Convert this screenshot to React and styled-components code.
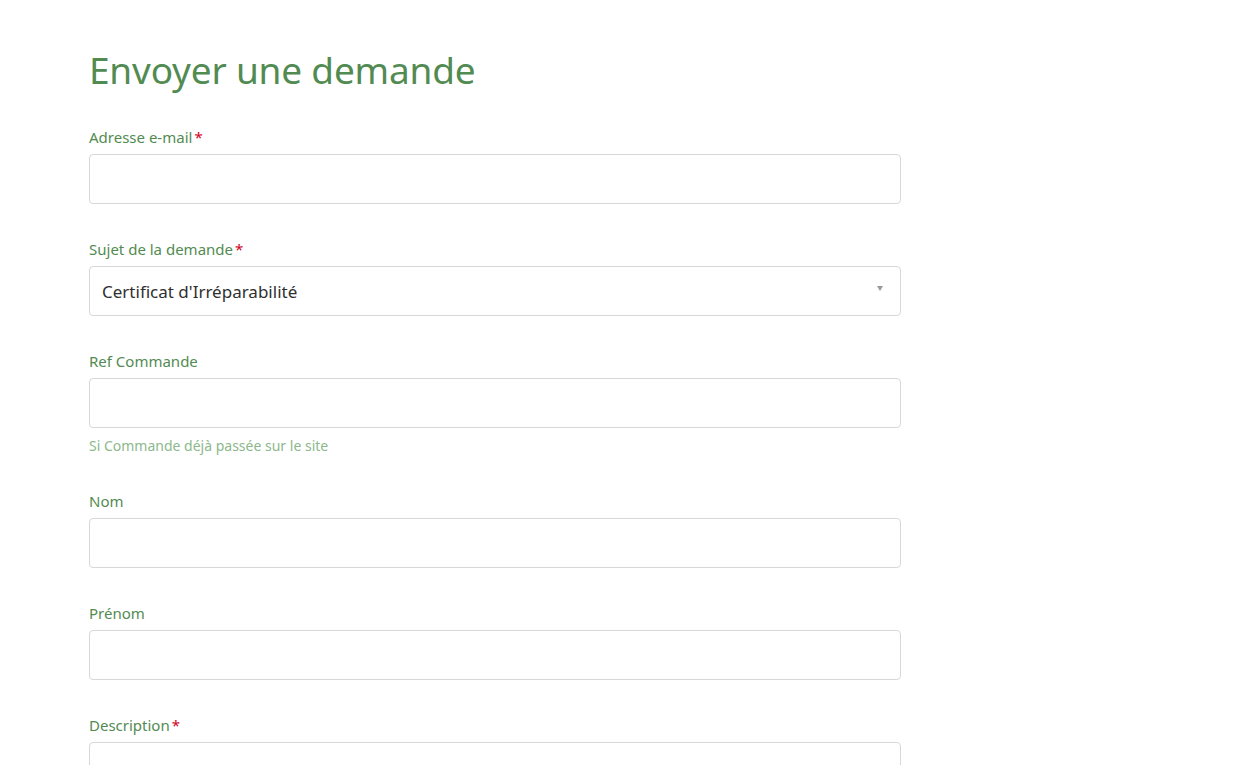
import React from "react";
import styled, { createGlobalStyle } from "styled-components";

const G = createGlobalStyle`
  body { margin: 0; background: #fff; font-family: "Noto Sans", "Open Sans", sans-serif; }
`;
const Page = styled.div`padding: 47px 0 0 89px; width: 812px;`;
const Title = styled.h1`
  margin: 0 0 34px; font-weight: 400; font-size: 37px; line-height: 46px; color: #528b52;
  letter-spacing: -0.2px;
`;
const Field = styled.div`margin-bottom: 35px;`;
const Label = styled.label`
  display: block; font-size: 15px; line-height: 20px; color: #528b52; margin-bottom: 7px;
`;
const Req = styled.span`color: #d0021b; margin-left: 2px;`;
const Input = styled.div`
  position: relative; box-sizing: border-box; height: 50px; border: 1px solid #d8d8d8; border-radius: 4px;
  display: flex; align-items: center; padding: 0 12px; font-size: 17px; color: #2f2f2f;
`;
const Caret = styled.span`
  position: absolute; right: 17px; top: 19px; width: 0; height: 0;
  border-left: 3px solid transparent; border-right: 3px solid transparent; border-top: 5px solid #999;
`;
const Hint = styled.div`font-size: 14px; line-height: 20px; color: #8cb88c; margin-top: 8px;`;

const fields = [
  { l: "Adresse e-mail", r: true },
  { l: "Sujet de la demande", r: true, v: "Certificat d'Irréparabilité", sel: true },
  { l: "Ref Commande", h: "Si Commande déjà passée sur le site" },
  { l: "Nom" },
  { l: "Prénom" },
  { l: "Description", r: true },
];

export default function App() {
  return (
    <Page>
      <G />
      <Title>Envoyer une demande</Title>
      {fields.map((f) => (
        <Field key={f.l}>
          <Label>{f.l}{f.r && <Req>*</Req>}</Label>
          <Input>{f.v}{f.sel && <Caret />}</Input>
          {f.h && <Hint>{f.h}</Hint>}
        </Field>
      ))}
    </Page>
  );
}
